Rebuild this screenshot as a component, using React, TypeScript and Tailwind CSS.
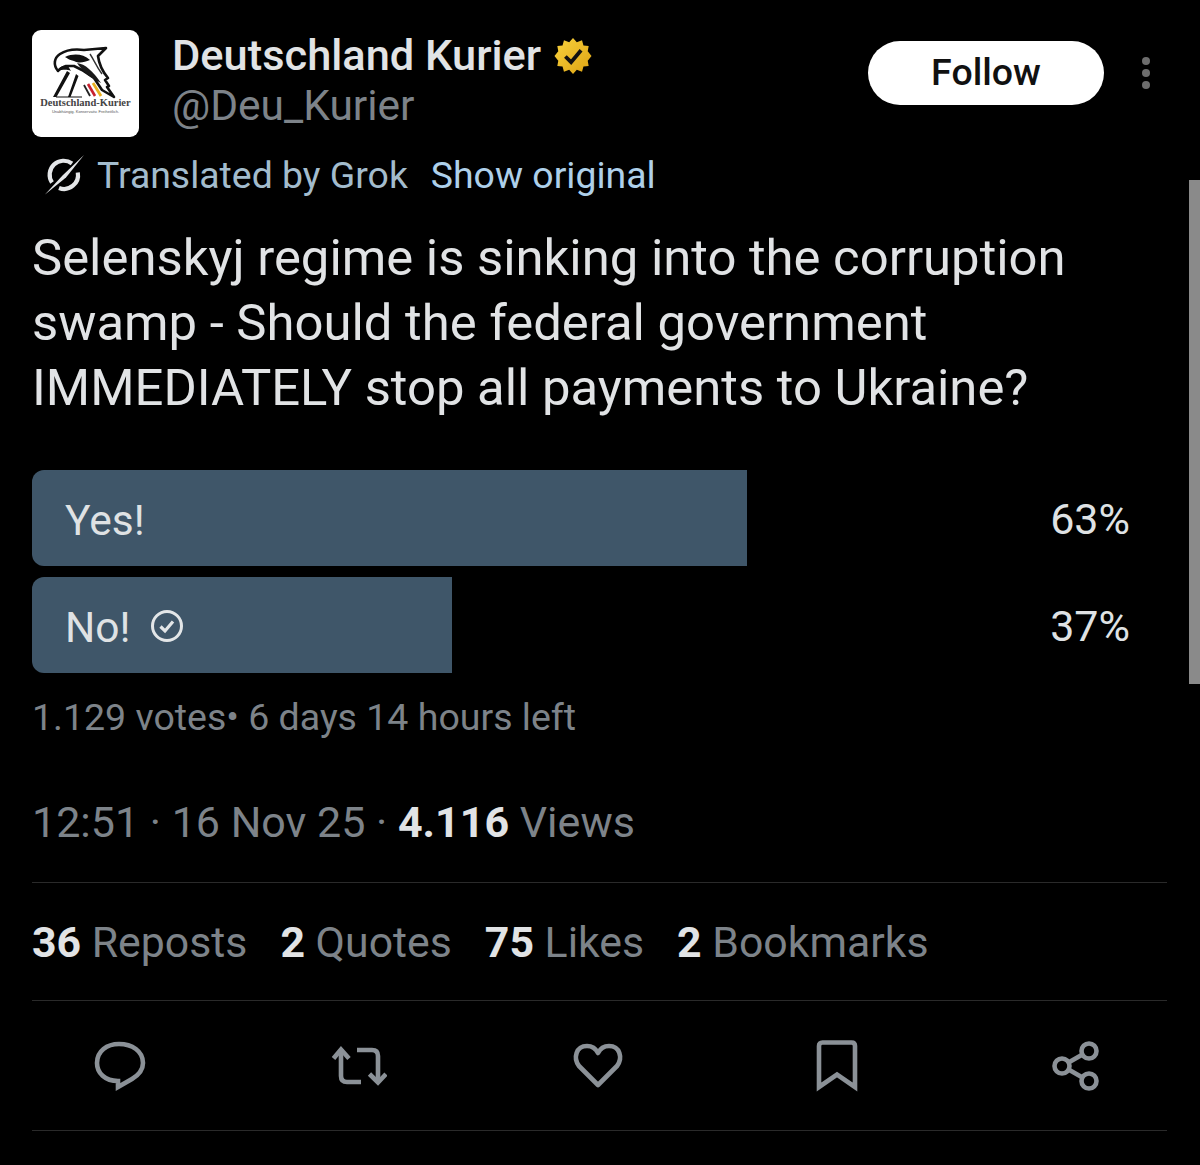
import React from "react";

const polls = [
  { label: "Yes!", pct: "63%", width: "w-[715px]", voted: false },
  { label: "No!", pct: "37%", width: "w-[420px]", voted: true },
];

const stats = [
  { n: "36", label: "Reposts" },
  { n: "2", label: "Quotes" },
  { n: "75", label: "Likes" },
  { n: "2", label: "Bookmarks" },
];

function Logo() {
  return (
    <div className="relative h-[107px] w-[107px] shrink-0 overflow-hidden rounded-[9px] bg-white">
      <svg viewBox="0 0 107 107" className="absolute inset-0 h-full w-full">
        {/* eagle head and neck */}
        <path d="M26 41 C21 35 22 28 28 24 C34 20 44 19 52 20 L74 18 L66 26 C67 34 70 41 76 48 L73 50 L77 56 L75 57 L82 67 L70 60 L62 48 L50 40 L42 36 L34 36 C31 37 28 38 26 41 Z" fill="#fff" stroke="#111" strokeWidth="2.6" strokeLinejoin="round" />
        <path d="M26 41 C27 37 31 35 36 36 L39 41 C34 39 30 40 26 41 Z" fill="#111" />
        <path d="M33 27 C42 23 51 24 58 30 C52 32 48 34 42 31 C38 30 36 29 33 27 Z" fill="#111" />
        <path d="M45 33 C53 34 61 41 69 53 C60 49 51 42 45 33 Z" fill="#1a1a1a" />
        <path d="M58 24 C62 30 64 36 70 44" fill="none" stroke="#333" strokeWidth="1.4" />
        <path d="M35 41 L21 67 L24.5 67 L38 43 Z M44 44 L36 67 L38.5 67 L46.5 46 Z" fill="#111" />
        <path d="M24 67 L50 67" stroke="#111" strokeWidth="1.2" />
        <path d="M52 55 L58 66" stroke="#222" strokeWidth="1.8" />
        <path d="M56 54 L63 66" stroke="#c8202e" strokeWidth="2.6" />
        <path d="M61 53 L69 66" stroke="#e8b020" strokeWidth="2.8" />
      </svg>
      <div className="absolute inset-x-0 top-[66px] text-center font-['Liberation_Serif',serif] text-[10.5px] leading-[14px] font-bold whitespace-nowrap text-[#444]">
        Deutschland-Kurier
      </div>
      <div className="absolute inset-x-0 top-[79px] text-center font-['Liberation_Sans',sans-serif] text-[4px] leading-[5px] whitespace-nowrap text-[#555]">
        Unabhängig. Konservativ. Freiheitlich.
      </div>
    </div>
  );
}

function VerifiedBadge() {
  return (
    <svg viewBox="0 0 40 40" className="ml-[13px] h-[38px] w-[38px] shrink-0">
      <defs>
        <linearGradient id="gold" x1="0" y1="0" x2="1" y2="1">
          <stop offset="0" stopColor="#f8d23e" />
          <stop offset="1" stopColor="#dda312" />
        </linearGradient>
      </defs>
      <path
        d="M20 1 L24 5.5 L29.5 3.5 L31 9 L36.5 9.5 L35.5 15 L39.5 20 L35.5 25 L36.5 30.5 L31 31 L29.5 36.5 L24 34.5 L20 39 L16 34.5 L10.5 36.5 L9 31 L3.5 30.5 L4.5 25 L0.5 20 L4.5 15 L3.5 9.5 L9 9 L10.5 3.5 L16 5.5 Z"
        fill="url(#gold)"
      />
      <path d="M12 20.5 L18 26.5 L28.5 14" fill="none" stroke="#111" strokeWidth="4" />
    </svg>
  );
}

function GrokMark() {
  return (
    <svg viewBox="0 0 40 40" className="h-[40px] w-[40px] shrink-0 text-[#e4e6e8]">
      <path d="M28 8.5 A14 14 0 0 0 8 27.5" fill="none" stroke="currentColor" strokeWidth="4.2" />
      <path d="M33.8 17.5 A14 14 0 0 1 15 33" fill="none" stroke="currentColor" strokeWidth="4.2" />
      <path d="M40 0 L22 22.5 L1 39.5 L18.5 20.5 Z" fill="currentColor" />
    </svg>
  );
}

function CheckCircle() {
  return (
    <svg viewBox="0 0 34 34" className="mb-[3px] ml-[19px] h-[34px] w-[34px] shrink-0" fill="none" stroke="#e3e6e8">
      <circle cx="17" cy="17" r="14.5" strokeWidth="3" />
      <path d="M10.5 17.5 L15 22 L23 12.5" strokeWidth="3.2" />
    </svg>
  );
}

const iconClass = "h-[56px] w-[56px] text-[#8b9197]";

function Actions() {
  return (
    <div className="flex h-[129px] items-center justify-between pr-[63px] pl-[60px]">
      <svg viewBox="0 0 56 56" className={iconClass} fill="none" stroke="currentColor" strokeWidth="4.6" strokeLinejoin="miter">
        <path d="M27 6 C40 6 51 13 51 25 C51 33 45 38 40 41 L26 49 L26 43 C13 43 5 35 5 25 C5 13 15 6 27 6 Z" />
      </svg>
      <svg viewBox="0 0 56 56" className={iconClass} fill="none" stroke="currentColor" strokeWidth="4.6">
        <path d="M2.5 20.5 L10 11.5 L18 20.5" />
        <path d="M10 11.5 L10 38 Q10 44 16 44 L30 44" />
        <path d="M26 12 L41 12 Q47 12 47 18 L47 44.5" />
        <path d="M38.5 36 L47 44.5 L55 36" />
      </svg>
      <svg viewBox="0 0 56 56" className={iconClass} fill="none" stroke="currentColor" strokeWidth="4.6" strokeLinejoin="round">
        <path d="M28 47 L9 28 C3 20 6 8 17 8 C22 8 26 11 28 15 C30 11 34 8 39 8 C50 8 53 20 47 28 Z" />
      </svg>
      <svg viewBox="0 0 56 56" className={iconClass} fill="none" stroke="currentColor" strokeWidth="4.6" strokeLinejoin="miter">
        <path d="M10 49 L10 8 Q10 4.5 13.5 4.5 L42.5 4.5 Q46 4.5 46 8 L46 49 L28 36.5 Z" />
      </svg>
      <svg viewBox="0 0 56 56" className={iconClass} fill="none" stroke="currentColor" strokeWidth="4.6">
        <circle cx="41" cy="13" r="7.5" />
        <circle cx="14" cy="28" r="7.5" />
        <circle cx="41" cy="43" r="7.5" />
        <path d="M20.5 24.5 L34.5 16.5 M20.5 31.5 L34.5 39.5" />
      </svg>
    </div>
  );
}

export default function App() {
  return (
    <div className="relative h-[1165px] w-[1200px] overflow-hidden bg-black pt-[30px] pl-[32px] font-['Roboto',sans-serif]">
      {/* scrollbar */}
      <div className="absolute top-[180px] right-0 h-[504px] w-[11px] bg-[#8a8a8a]" />

      {/* Header */}
      <div className="flex h-[107px]">
        <Logo />
        <div className="ml-[33px] flex w-[696px] flex-col pt-[1px]">
          <div className="flex h-[50px] items-center">
            <span className="text-[43.4px] leading-[50px] font-medium whitespace-nowrap text-[#e1e3e5]">Deutschland Kurier</span>
            <VerifiedBadge />
          </div>
          <div className="text-[42.5px] leading-[50px] text-[#7d8389]">@Deu_Kurier</div>
        </div>
        <div className="mt-[11px] flex h-[64px] w-[236px] items-center justify-center rounded-full bg-white pb-[2px] text-[37.5px] font-medium text-[#111]">
          Follow
        </div>
        <div className="mt-[27px] ml-[38px] flex h-[32px] flex-col justify-between">
          <div className="h-[8px] w-[8px] rounded-full bg-[#6d6d6d]" />
          <div className="h-[8px] w-[8px] rounded-full bg-[#6d6d6d]" />
          <div className="h-[8px] w-[8px] rounded-full bg-[#6d6d6d]" />
        </div>
      </div>

      {/* Translation row */}
      <div className="mt-[13px] ml-[12px] flex h-[50px] items-center text-[37.4px] leading-[50px]">
        <GrokMark />
        <span className="ml-[13px] text-[#a3bccd]">Translated by Grok</span>
        <span className="ml-[23px] text-[#aed0ea]">Show original</span>
      </div>

      {/* Tweet text */}
      <div className="mt-[25px] w-[1120px] text-[50.8px] leading-[65px] text-[#e1e3e5]">
        Selenskyj regime is sinking into the corruption
        <br />
        swamp - Should the federal government
        <br />
        IMMEDIATELY stop all payments to Ukraine?
      </div>

      {/* Poll */}
      <div className="mt-[50px] flex w-[1098px] flex-col gap-[11px]">
        {polls.map((p) => (
          <div key={p.label} className="flex h-[96px] items-center justify-between">
            <div className={`flex h-full items-center rounded-l-[12px] bg-[#3f5669] pt-[5px] pl-[33px] text-[42.5px] text-[#dfe2e4] ${p.width}`}>
              {p.label}
              {p.voted && <CheckCircle />}
            </div>
            <span className="pt-[2px] text-[43px] text-[#dfe2e4]">{p.pct}</span>
          </div>
        ))}
      </div>
      <div className="mt-[19px] text-[37.5px] leading-[50px] text-[#7d8389]">1.129 votes• 6 days 14 hours left</div>

      {/* Time and views */}
      <div className="mt-[55px] flex h-[50px] items-center text-[43px] whitespace-pre text-[#7d8389]">
        12:51 · 16 Nov 25 · <span className="font-bold text-[#e1e3e5]">4.116</span> Views
      </div>

      {/* Stats */}
      <div className="mt-[35px] mr-[33px] flex h-[119px] items-center gap-[33px] border-y-[1.5px] border-[#2a2a2a] pt-[2px] text-[42.8px] whitespace-pre text-[#7d8389]">
        {stats.map((s) => (
          <span key={s.label}>
            <span className="font-bold text-[#e1e3e5]">{s.n}</span> {s.label}
          </span>
        ))}
      </div>

      <div className="mr-[33px] border-b-[1.5px] border-[#2a2a2a]">
        <Actions />
      </div>
    </div>
  );
}
